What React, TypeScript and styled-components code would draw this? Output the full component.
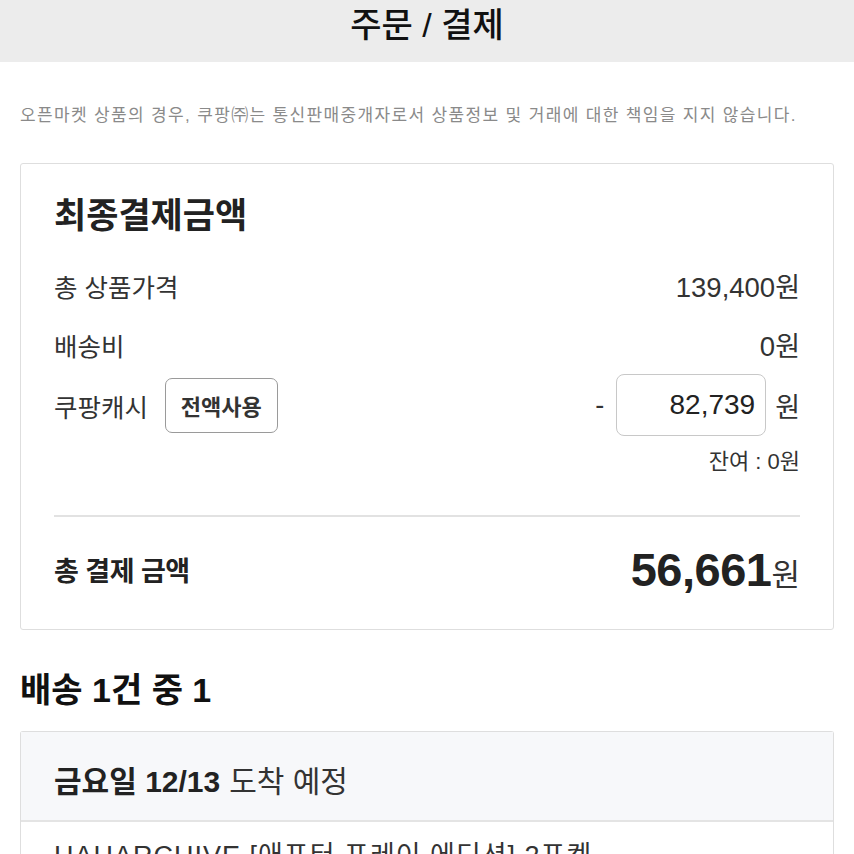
import React from "react";
import styled, { createGlobalStyle } from "styled-components";

const Global = createGlobalStyle`
  html, body { margin: 0; padding: 0; background: #fff; }
  body { font-family: "Liberation Sans", "Noto Sans CJK KR", sans-serif; color: #222; }
  * { box-sizing: border-box; }
`;

const FONT = `"Liberation Sans", "Noto Sans CJK KR", sans-serif`;

const Header = styled.header`
  height: 62px;
  background: #ececec;
  display: flex;
  align-items: center;
  justify-content: center;
  font-family: ${FONT};
  font-size: 34px;
  font-weight: 500;
  color: #111;
  padding-bottom: 18px;
`;

const Main = styled.main`
  padding: 0 20px;
`;

const Notice = styled.p`
  margin: 42px 0 35px;
  font-family: ${FONT};
  font-size: 17px;
  line-height: 24px;
  color: #8a8a8a;
  letter-spacing: 1.35px;
  white-space: nowrap;
`;

const Card = styled.section`
  border: 1.5px solid #dedede;
  border-radius: 3px;
  background: #fff;
  padding: 32px 33px 0;
`;

const CardTitle = styled.h2`
  margin: 0 0 20px;
  font-family: ${FONT};
  font-size: 35px;
  line-height: 40px;
  font-weight: 700;
  color: #222;
`;

const Row = styled.div<{ $h?: number }>`
  display: flex;
  align-items: center;
  justify-content: space-between;
  height: ${(p) => p.$h ?? 59}px;
`;

const Label = styled.span`
  font-family: ${FONT};
  font-size: 25.5px;
  color: #333;
  display: flex;
  align-items: center;
  gap: 17px;
`;

const Amount = styled.span`
  font-family: ${FONT};
  font-size: 27.5px;
  color: #333;
`;

const Won = styled.span<{ $size?: number }>`
  font-family: ${FONT};
  font-size: ${(p) => p.$size ?? 26}px;
  color: #333;
`;

const UseAllButton = styled.button`
  width: 113px;
  height: 55px;
  border: 1.5px solid #9a9a9a;
  border-radius: 7px;
  background: #fff;
  font-family: ${FONT};
  font-size: 22px;
  font-weight: 600;
  color: #333;
  padding: 0;
`;

const CashGroup = styled.div`
  display: flex;
  align-items: center;
  gap: 9px;
`;

const Minus = styled.span`
  font-family: ${FONT};
  font-size: 27px;
  color: #333;
  margin-right: 3px;
`;

const CashInput = styled.div`
  width: 150px;
  height: 62px;
  border: 1.5px solid #c8c8c8;
  border-radius: 8px;
  display: flex;
  align-items: center;
  justify-content: flex-end;
  padding-right: 10px;
  font-family: ${FONT};
  font-size: 28px;
  color: #222;
`;

const Remain = styled.div`
  margin-top: 12px;
  text-align: right;
  font-family: ${FONT};
  font-size: 22px;
  line-height: 28px;
  color: #333;
`;

const Divider = styled.hr`
  margin: 39px 0 0;
  border: 0;
  height: 2px;
  background: #e2e2e2;
`;

const TotalRow = styled.div`
  display: flex;
  align-items: center;
  justify-content: space-between;
  height: 112px;
  padding-bottom: 8px;
`;

const TotalLabel = styled.span`
  font-family: ${FONT};
  font-size: 27px;
  font-weight: 700;
  color: #222;
  letter-spacing: -0.5px;
`;

const TotalAmount = styled.span`
  display: flex;
  align-items: baseline;
`;

const BigNum = styled.span`
  font-family: ${FONT};
  font-size: 47px;
  font-weight: 700;
  color: #222;
  letter-spacing: -0.5px;
`;

const SectionTitle = styled.h3`
  margin: 40px 0 21px;
  font-family: ${FONT};
  font-size: 34px;
  line-height: 40px;
  font-weight: 700;
  color: #111;
`;

const DeliveryCard = styled.section`
  border: 1.5px solid #dedede;
  border-radius: 3px;
  border-bottom: 0;
`;

const DeliveryHead = styled.div`
  background: #f7f8fa;
  height: 90px;
  display: flex;
  align-items: center;
  padding: 6px 33px 0;
  border-bottom: 2px solid #e4e4e4;
  font-family: ${FONT};
  font-size: 30px;
  color: #333;
  gap: 9px;
`;

const Strong = styled.strong`
  font-weight: 700;
  color: #222;
`;

const Product = styled.div`
  padding: 16px 33px 20px;
  font-family: ${FONT};
  font-size: 27px;
  line-height: 36px;
  color: #333;
  letter-spacing: 1px;
  max-width: 620px;
`;

export default function App() {
  return (
    <>
      <Global />
      <Header>주문 / 결제</Header>
      <Main>
        <Notice>
          오픈마켓 상품의 경우, 쿠팡㈜는 통신판매중개자로서 상품정보 및 거래에 대한 책임을 지지 않습니다.
        </Notice>
        <Card>
          <CardTitle>최종결제금액</CardTitle>
          <Row>
            <Label>총 상품가격</Label>
            <span>
              <Amount>139,400</Amount>
              <Won $size={27}>원</Won>
            </span>
          </Row>
          <Row>
            <Label>배송비</Label>
            <span>
              <Amount>0</Amount>
              <Won $size={27}>원</Won>
            </span>
          </Row>
          <Row $h={62}>
            <Label>
              쿠팡캐시
              <UseAllButton>전액사용</UseAllButton>
            </Label>
            <CashGroup>
              <Minus>-</Minus>
              <CashInput>82,739</CashInput>
              <Won $size={27}>원</Won>
            </CashGroup>
          </Row>
          <Remain>잔여 : 0원</Remain>
          <Divider />
          <TotalRow>
            <TotalLabel>총 결제 금액</TotalLabel>
            <TotalAmount>
              <BigNum>56,661</BigNum>
              <Won $size={31}>원</Won>
            </TotalAmount>
          </TotalRow>
        </Card>
        <SectionTitle>배송 1건 중 1</SectionTitle>
        <DeliveryCard>
          <DeliveryHead>
            <Strong>금요일 12/13</Strong>
            <span>도착 예정</span>
          </DeliveryHead>
          <Product>HAHARCHIVE [애프터 프레이 에디션] 2포켓 백팩</Product>
        </DeliveryCard>
      </Main>
    </>
  );
}
